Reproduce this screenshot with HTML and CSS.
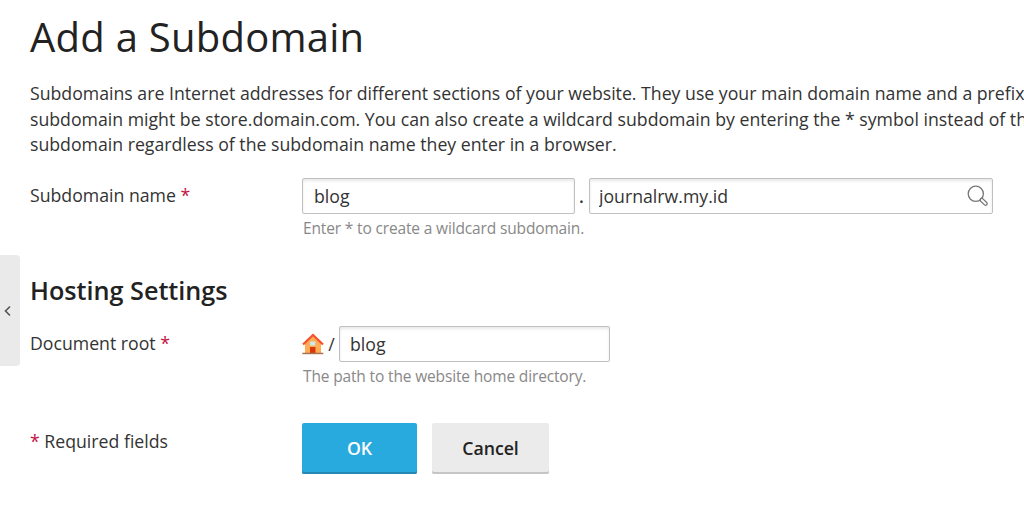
FILE: index.html
```
<!DOCTYPE html>
<html lang="en">
<head>
<meta charset="utf-8">
<meta name="viewport" content="width=device-width, initial-scale=1.0">
<link rel="stylesheet" href="styles.css">
<title>Add a Subdomain</title>
</head>
<body>
<div class="page">
  <!-- Sidebar toggle -->
  <div class="sidebar">
    <button type="button" class="toggle" aria-label="Toggle sidebar">
      <svg width="8" height="12" viewBox="0 0 8 12"><path d="M7 1.5 L2.5 6 L7 10.5" fill="none" stroke="#555" stroke-width="1.6"/></svg>
    </button>
  </div>

  <div class="content">
    <h1>Add a Subdomain</h1>
    <p class="intro">Subdomains are Internet addresses for different sections of your website. They use your main domain name and a prefix<br>
    subdomain might be store.domain.com. You can also create a wildcard subdomain by entering the * symbol instead of the<br>
    subdomain regardless of the subdomain name they enter in a browser.</p>

    <form>
      <div class="row row-name">
        <label for="name">Subdomain name <span class="required">*</span></label>
        <div class="field">
          <div class="controls">
            <input id="name" class="input-name" type="text" value="blog">
            <span class="dot">.</span>
            <div class="lookup">
              <input type="text" value="journalrw.my.id">
              <svg width="22" height="22" viewBox="0 0 22 22" fill="none" stroke="#777">
                <circle cx="8.8" cy="8.8" r="7.6" stroke-width="1.3"/>
                <path d="M14.6 14.9 L18.6 18.7" stroke="#777" stroke-width="4.4" stroke-linecap="round"/>
                <path d="M14.8 15 L18.6 18.7" stroke="#fff" stroke-width="1.9" stroke-linecap="round"/>
              </svg>
            </div>
          </div>
          <div class="hint">Enter * to create a wildcard subdomain.</div>
        </div>
      </div>

      <h2>Hosting Settings</h2>

      <div class="row row-root">
        <label for="root">Document root <span class="required">*</span></label>
        <div class="field">
          <div class="controls">
            <svg class="home" width="22" height="22" viewBox="0 0 22 22">
              <path d="M3 10 L11 3 L19 10 V20 H3 Z" fill="#ffad55"/>
              <path d="M1 11.5 L11 2 L21 11.5" fill="none" stroke="#f4512c" stroke-width="2.3"/>
              <rect x="8.2" y="8.5" width="5" height="4" fill="#cbeaf2"/>
              <rect x="8" y="14" width="5.5" height="6" fill="#d8390b"/>
              <rect x="0.3" y="19.7" width="21" height="1.5" fill="#aa7353"/>
            </svg>
            <span class="slash">/</span>
            <input id="root" class="input-root" type="text" value="blog">
          </div>
          <div class="hint">The path to the website home directory.</div>
        </div>
      </div>

      <div class="row">
        <div class="note"><span class="required">*</span> Required fields</div>
        <div class="buttons">
          <button type="button" class="btn btn-ok">OK</button>
          <button type="button" class="btn btn-cancel">Cancel</button>
        </div>
      </div>
    </form>
  </div>
</div>
</body>
</html>
```
FILE: styles.css
```
* {
  box-sizing: border-box;
}

body {
  margin: 0;
  background-color: #fff;
  color: #333;
  font-family: "Open Sans", "Noto Sans", sans-serif;
  font-size: 17.7px;
  line-height: 25.4px;
  overflow: hidden;
}

.page {
  display: flex;
  height: 514px;
}

/* Sidebar toggle */
.sidebar {
  flex: 0 0 30px;
  padding-top: 255px;
}

.toggle {
  display: flex;
  align-items: center;
  width: 20px;
  height: 111px;
  padding: 0 0 0 3px;
  border: none;
  border-radius: 0 4px 4px 0;
  background-color: #eaeaea;
}

.content {
  flex: 1;
  min-width: 0;
}

h1 {
  margin: 10px 0 0;
  color: #222;
  font-size: 40px;
  font-weight: 400;
  line-height: 54px;
  letter-spacing: 0.25px;
}

.intro {
  margin: 17.3px 0 20.7px;
  white-space: nowrap;
}

h2 {
  margin: 0;
  color: #222;
  font-size: 25.2px;
  font-weight: 600;
  line-height: 32px;
}

/* Form rows */
.row {
  display: grid;
  grid-template-columns: 272px 1fr;
}

.row-name {
  height: 96px;
}

.row-root {
  margin-top: 20px;
  height: 97px;
}

label {
  padding-top: 4.6px;
}

.required {
  color: #c4123f;
}

.controls {
  display: flex;
  align-items: center;
}

input {
  height: 36px;
  padding: 0 11px 1px;
  border: 1px solid #c0c0c0;
  border-radius: 2px;
  background-color: #fff;
  box-shadow: inset 0 2px 3px #e8e8e8;
  color: #333;
  font: inherit;
}

.input-name {
  width: 273px;
}

.input-root {
  width: 271px;
  padding-left: 10px;
}

.dot {
  width: 14px;
  padding-right: 1px;
  text-align: center;
  font-weight: 600;
}

.lookup {
  position: relative;
}

.lookup input {
  display: block;
  width: 404px;
  padding-left: 9px;
}

/* Icon over the right end of the input */
.lookup svg {
  position: absolute;
  top: 7px;
  right: 4px;
}

.slash {
  width: 15px;
  text-align: center;
}

.hint {
  margin-top: 2px;
  padding-left: 1px;
  color: #888;
  font-size: 15.5px;
  letter-spacing: -0.15px;
}

.buttons {
  display: flex;
  gap: 15px;
}

.note {
  padding-top: 6px;
}

.btn {
  height: 51px;
  padding: 0;
  border: none;
  border-radius: 2px;
  font: inherit;
  font-weight: 600;
}

.btn-ok {
  width: 115px;
  background-color: #28aade;
  box-shadow: inset 0 -2px #2389b3;
  color: #fff;
}

.btn-cancel {
  width: 117px;
  background-color: #ebebeb;
  box-shadow: inset 0 -2px #c5c5c5;
  color: #222;
}
```
